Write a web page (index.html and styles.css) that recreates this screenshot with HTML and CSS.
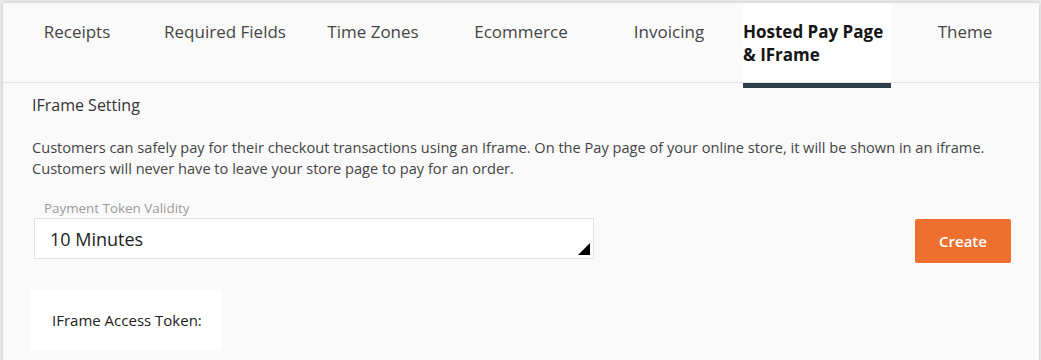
FILE: index.html
```html
<!DOCTYPE html>
<html>
<head>
<meta charset="utf-8">
<link rel="stylesheet" href="styles.css">
</head>
<body>
<div class="card">
  <nav class="tabs">
    <div class="tab">Receipts</div>
    <div class="tab">Required Fields</div>
    <div class="tab">Time Zones</div>
    <div class="tab">Ecommerce</div>
    <div class="tab">Invoicing</div>
    <div class="tab active">Hosted Pay Page &amp; IFrame</div>
    <div class="tab">Theme</div>
  </nav>
  <section class="content">
    <h2 class="heading">IFrame Setting</h2>
    <p class="desc">Customers can safely pay for their checkout transactions using an Iframe. On the Pay page of your online store, it will be shown in an iframe. Customers will never have to leave your store page to pay for an order.</p>
    <div class="row">
      <div class="field">
        <div class="label">Payment Token Validity</div>
        <div class="select">
          <span class="value">10 Minutes</span>
          <svg class="corner" width="12" height="12" viewBox="0 0 12 12"><polygon points="12,0 12,12 0,12" fill="#000"/></svg>
        </div>
      </div>
      <button class="btn">Create</button>
    </div>
    <div class="token">IFrame Access Token:</div>
  </section>
</div>
</body>
</html>
```
FILE: styles.css
```css
html, body {
  margin: 0;
  padding: 0;
}
body {
  background: #ececec;
  font-family: "Open Sans", "Liberation Sans", sans-serif;
  padding: 3px 2px 0 3px;
  height: 357px;
  overflow: hidden;
}
.card {
  width: 1036px;
  height: 400px;
  background: #fafafa;
  box-shadow: 0 0 4px rgba(0, 0, 0, 0.18);
}
.tabs {
  display: flex;
  height: 79px;
  border-bottom: 1px solid #e3e3e3;
}
.tab {
  width: 148px;
  flex: none;
  box-sizing: border-box;
  text-align: center;
  font-size: 17px;
  line-height: 23px;
  color: #454545;
  padding-top: 17px;
  position: relative;
}
.tab.active {
  background: #fff;
  text-align: left;
  font-weight: 700;
  color: #151515;
  padding-right: 2px;
}
.tab.active::after {
  content: "";
  position: absolute;
  left: 0;
  right: 0;
  bottom: -6px;
  height: 5px;
  background: #2d3e4a;
}
.content {
  padding: 12px 28px 0 29px;
}
.heading {
  margin: 0;
  font-size: 16px;
  font-weight: 400;
  line-height: 20px;
  color: #333;
}
.desc {
  margin: 22px 0 0;
  font-size: 14.6px;
  line-height: 21px;
  color: #444;
}
.row {
  display: flex;
  justify-content: space-between;
  align-items: flex-start;
  margin-top: 21px;
}
.field {
  margin-left: 2px;
}
.label {
  font-size: 13.4px;
  line-height: 16px;
  color: #9a9a9a;
  padding-left: 10px;
}
.select {
  position: relative;
  margin-top: 2px;
  width: 560px;
  height: 41px;
  box-sizing: border-box;
  background: #fff;
  border: 1px solid #e2e2e2;
  padding-left: 15px;
  display: flex;
  align-items: center;
}
.value {
  font-size: 18px;
  color: #222;
  line-height: 24px;
}
.corner {
  position: absolute;
  right: 3px;
  bottom: 3px;
}
.btn {
  margin-top: 19px;
  width: 96px;
  height: 44px;
  border: none;
  border-radius: 2px;
  background: #ef6f2e;
  color: #fff;
  font-family: "Open Sans", "Liberation Sans", sans-serif;
  font-size: 15px;
  font-weight: 600;
  padding: 0;
}
.token {
  margin-top: 27px;
  margin-left: -1px;
  width: 190px;
  height: 60px;
  box-sizing: border-box;
  background: #fff;
  padding-left: 21px;
  display: flex;
  align-items: center;
  font-size: 15px;
  color: #222;
}
```
